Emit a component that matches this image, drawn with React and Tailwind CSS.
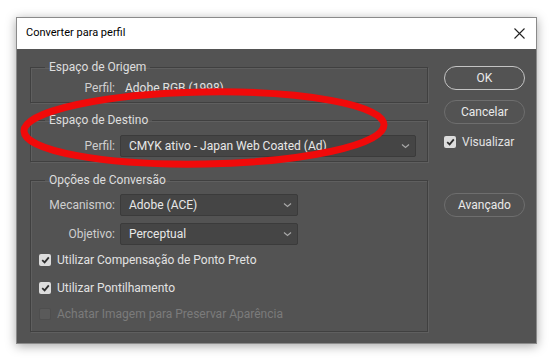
import React from 'react'

const Chevron = () => (
  <svg width="9" height="6" viewBox="0 0 9 6" className="shrink-0">
    <path d="M1 1.5 L4.5 4.5 L8 1.5" fill="none" stroke="#a8a8a8" strokeWidth="1.2" />
  </svg>
)

const Select = ({ value, width }) => (
  <div className={`flex items-center justify-between h-[22px] ${width} bg-[#454545] border border-[#3b3b3b] rounded-[2px] pl-[8px] pr-[5px] text-[#e8e8e8]`}>
    <span>{value}</span>
    <Chevron />
  </div>
)

const Check = ({ label, checked = true, disabled = false }) => (
  <div className="flex items-center h-[16px] gap-[6px]">
    {checked ? (
      <div className="w-[12px] h-[12px] rounded-[2px] bg-[#dcdcdc] flex items-center justify-center">
        <svg width="9" height="8" viewBox="0 0 9 8">
          <path d="M1.2 4.2 L3.6 6.4 L7.8 1.4" fill="none" stroke="#2e2e2e" strokeWidth="1.8" />
        </svg>
      </div>
    ) : (
      <div className="w-[12px] h-[12px] rounded-[2px] bg-[#5a5a5a] border border-[#4e4e4e]" />
    )}
    <span className={disabled ? 'text-[#7b7b7b]' : 'text-[#e2e2e2]'}>{label}</span>
  </div>
)

const Group = ({ title, children, className }) => (
  <fieldset className={`border border-[#404040] shadow-[inset_1px_1px_0_#5f5f5f,1px_1px_0_#5f5f5f] ${className}`}>
    <legend className="ml-[14px] px-[4px] leading-[16px] text-[#dedede]">{title}</legend>
    {children}
  </fieldset>
)

const Button = ({ children, strong }) => (
  <button className={`w-[81px] h-[24px] rounded-full border ${strong ? 'border-[#c4c4c4]' : 'border-[#6e6e6e]'} text-[#eaeaea] leading-none`}>
    {children}
  </button>
)

export default function App() {
  return (
    <div className="relative w-[553px] h-[361px] bg-white overflow-hidden" style={{ fontFamily: 'Roboto, "Liberation Sans", sans-serif' }}>
      <div className="ml-[16px] mt-[17px] w-[521px] h-[327px] border border-[#8a8a8a] shadow-[0_2px_10px_rgba(0,0,0,0.35)] flex flex-col">
        {/* Title bar */}
        <div className="h-[31px] bg-white flex items-center justify-between pl-[9px] pr-[11px] text-[11px] text-black">
          <span>Converter para perfil</span>
          <svg width="11" height="11" viewBox="0 0 11 11">
            <path d="M0.5 0.5 L10.5 10.5 M10.5 0.5 L0.5 10.5" stroke="#222" strokeWidth="1.1" />
          </svg>
        </div>

        {/* Body */}
        <div className="flex-1 bg-[#535353] flex pl-[13px] pr-[11px] pt-[10px] text-[12px] text-[#d8d8d8]">
          <div className="w-[398px] flex flex-col">
            <Group title="Espaço de Origem" className="pt-[5px] pb-[6px]">
              <div className="flex items-center h-[16px]">
                <span className="w-[84px] text-right text-[#cfcfcf]">Perfil:</span>
                <span className="pl-[10px] text-[#e2e2e2]">Adobe RGB (1998)</span>
              </div>
            </Group>

            <Group title="Espaço de Destino" className="mt-[9px] pt-[7px] pb-[4px]">
              <div className="flex items-center gap-[5px]">
                <span className="w-[84px] text-right text-[#cfcfcf]">Perfil:</span>
                <Select value="CMYK ativo - Japan Web Coated (Ad)" width="w-[296px]" />
              </div>
            </Group>

            <Group title="Opções de Conversão" className="mt-[10px] pt-[6px] pb-[9px]">
              <div className="flex items-center gap-[5px]">
                <span className="w-[84px] text-right text-[#cfcfcf]">Mecanismo:</span>
                <Select value="Adobe (ACE)" width="w-[178px]" />
              </div>
              <div className="flex items-center gap-[5px] mt-[7px]">
                <span className="w-[84px] text-right text-[#cfcfcf]">Objetivo:</span>
                <Select value="Perceptual" width="w-[178px]" />
              </div>
              <div className="pl-[8px] mt-[7px] flex flex-col gap-[12px]">
                <Check label="Utilizar Compensação de Ponto Preto" />
                <Check label="Utilizar Pontilhamento" />
                <div className="-mt-[2px]">
                  <Check label="Achatar Imagem para Preservar Aparência" checked={false} disabled />
                </div>
              </div>
            </Group>
          </div>

          <div className="ml-[16px] flex flex-col pt-[7px]">
            <Button strong>OK</Button>
            <div className="mt-[10px]">
              <Button>Cancelar</Button>
            </div>
            <div className="mt-[10px] flex items-center">
              <Check label="Visualizar" />
            </div>
            <div className="mt-[43px]">
              <Button>Avançado</Button>
            </div>
          </div>
        </div>
      </div>

      {/* red highlight ellipse drawn over the screenshot */}
      <svg className="absolute inset-0 pointer-events-none" width="553" height="361" viewBox="0 0 553 361">
        <ellipse cx="204" cy="128" rx="180" ry="36" fill="none" stroke="#f00a0a" strokeWidth="7" transform="rotate(-1 204 128)" />
      </svg>
    </div>
  )
}
